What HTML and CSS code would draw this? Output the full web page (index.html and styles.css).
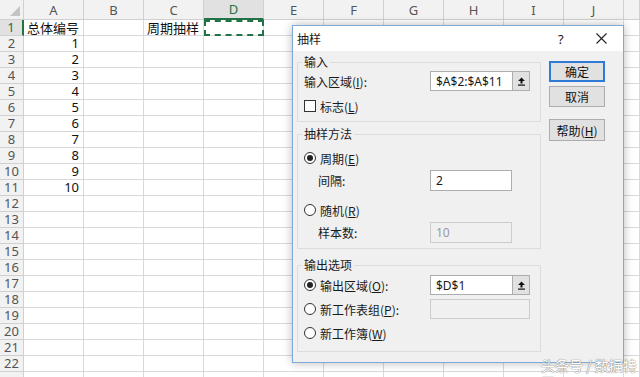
FILE: index.html
```html
<!DOCTYPE html>
<html lang="zh">
<head>
    <meta charset="UTF-8">
    <title>抽样</title>
    <link rel="stylesheet" href="styles.css">
</head>
<body>

<div class="sheet-wrap">
<table class="sheet">
    <colgroup>
        <col class="col-head">
        <col><col><col><col><col><col><col><col><col><col>
        <col class="col-edge">
    </colgroup>
    <tr class="head-row">
        <th class="corner"><span class="corner-mark"></span></th>
        <th>A</th><th>B</th><th>C</th><th class="active">D</th><th>E</th><th>F</th><th>G</th><th>H</th><th>I</th><th>J</th><th></th>
    </tr>
    <tr><th class="active">1</th><td class="text">总体编号</td><td></td><td class="text">周期抽样</td><td class="copied"></td><td></td><td></td><td></td><td></td><td></td><td></td><td></td></tr>
    <tr><th>2</th><td class="num">1</td><td></td><td></td><td></td><td></td><td></td><td></td><td></td><td></td><td></td><td></td></tr>
    <tr><th>3</th><td class="num">2</td><td></td><td></td><td></td><td></td><td></td><td></td><td></td><td></td><td></td><td></td></tr>
    <tr><th>4</th><td class="num">3</td><td></td><td></td><td></td><td></td><td></td><td></td><td></td><td></td><td></td><td></td></tr>
    <tr><th>5</th><td class="num">4</td><td></td><td></td><td></td><td></td><td></td><td></td><td></td><td></td><td></td><td></td></tr>
    <tr><th>6</th><td class="num">5</td><td></td><td></td><td></td><td></td><td></td><td></td><td></td><td></td><td></td><td></td></tr>
    <tr><th>7</th><td class="num">6</td><td></td><td></td><td></td><td></td><td></td><td></td><td></td><td></td><td></td><td></td></tr>
    <tr><th>8</th><td class="num">7</td><td></td><td></td><td></td><td></td><td></td><td></td><td></td><td></td><td></td><td></td></tr>
    <tr><th>9</th><td class="num">8</td><td></td><td></td><td></td><td></td><td></td><td></td><td></td><td></td><td></td><td></td></tr>
    <tr><th>10</th><td class="num">9</td><td></td><td></td><td></td><td></td><td></td><td></td><td></td><td></td><td></td><td></td></tr>
    <tr><th>11</th><td class="num">10</td><td></td><td></td><td></td><td></td><td></td><td></td><td></td><td></td><td></td><td></td></tr>
    <tr><th>12</th><td></td><td></td><td></td><td></td><td></td><td></td><td></td><td></td><td></td><td></td><td></td></tr>
    <tr><th>13</th><td></td><td></td><td></td><td></td><td></td><td></td><td></td><td></td><td></td><td></td><td></td></tr>
    <tr><th>14</th><td></td><td></td><td></td><td></td><td></td><td></td><td></td><td></td><td></td><td></td><td></td></tr>
    <tr><th>15</th><td></td><td></td><td></td><td></td><td></td><td></td><td></td><td></td><td></td><td></td><td></td></tr>
    <tr><th>16</th><td></td><td></td><td></td><td></td><td></td><td></td><td></td><td></td><td></td><td></td><td></td></tr>
    <tr><th>17</th><td></td><td></td><td></td><td></td><td></td><td></td><td></td><td></td><td></td><td></td><td></td></tr>
    <tr><th>18</th><td></td><td></td><td></td><td></td><td></td><td></td><td></td><td></td><td></td><td></td><td></td></tr>
    <tr><th>19</th><td></td><td></td><td></td><td></td><td></td><td></td><td></td><td></td><td></td><td></td><td></td></tr>
    <tr><th>20</th><td></td><td></td><td></td><td></td><td></td><td></td><td></td><td></td><td></td><td></td><td></td></tr>
    <tr><th>21</th><td></td><td></td><td></td><td></td><td></td><td></td><td></td><td></td><td></td><td></td><td></td></tr>
    <tr><th>22</th><td></td><td></td><td></td><td></td><td></td><td></td><td></td><td></td><td></td><td></td><td></td></tr>
    <tr class="last-row"><th></th><td></td><td></td><td></td><td></td><td></td><td></td><td></td><td></td><td></td><td></td><td></td></tr>
</table>
</div>

<!-- 抽样 对话框 -->
<div class="dialog">
    <div class="titlebar">
        <span class="title">抽样</span>
        <span class="help">?</span>
        <span class="close">
            <svg width="11" height="11" viewBox="0 0 11 11"><path d="M0.5 0.5 L10.5 10.5 M10.5 0.5 L0.5 10.5" stroke="#222" stroke-width="1.1" fill="none"/></svg>
        </span>
    </div>

    <div class="dialog-body">
        <div class="groups">
            <fieldset class="group group-input">
                <legend>输入</legend>
                <div class="row">
                    <span class="label">输入区域(<u>I</u>):</span>
                    <span class="ref-input"><span class="box">$A$2:$A$11</span><span class="ref-btn"><svg width="9" height="9" viewBox="0 0 9 9"><path d="M4.5 0.5 L8 4 L5.5 4 L5.5 6.5 L3.5 6.5 L3.5 4 L1 4 Z" fill="#111"/><rect x="1" y="7.5" width="7" height="1.2" fill="#111"/></svg></span></span>
                </div>
                <div class="row row-check">
                    <span class="checkbox"></span>
                    <span class="opt">标志(<u>L</u>)</span>
                </div>
            </fieldset>

            <fieldset class="group group-method">
                <legend>抽样方法</legend>
                <div class="row">
                    <span class="radio checked"></span>
                    <span class="opt">周期(<u>E</u>)</span>
                </div>
                <div class="row">
                    <span class="label indent">间隔:</span>
                    <span class="box plain">2</span>
                </div>
                <div class="row row-gap">
                    <span class="radio"></span>
                    <span class="opt">随机(<u>R</u>)</span>
                </div>
                <div class="row">
                    <span class="label indent">样本数:</span>
                    <span class="box plain disabled">10</span>
                </div>
            </fieldset>

            <fieldset class="group group-output">
                <legend>输出选项</legend>
                <div class="row">
                    <span class="radio checked"></span>
                    <span class="label short">输出区域(<u>O</u>):</span>
                    <span class="ref-input"><span class="box">$D$1</span><span class="ref-btn"><svg width="9" height="9" viewBox="0 0 9 9"><path d="M4.5 0.5 L8 4 L5.5 4 L5.5 6.5 L3.5 6.5 L3.5 4 L1 4 Z" fill="#111"/><rect x="1" y="7.5" width="7" height="1.2" fill="#111"/></svg></span></span>
                </div>
                <div class="row">
                    <span class="radio"></span>
                    <span class="label short">新工作表组(<u>P</u>):</span>
                    <span class="box wide disabled"></span>
                </div>
                <div class="row">
                    <span class="radio"></span>
                    <span class="opt">新工作簿(<u>W</u>)</span>
                </div>
            </fieldset>
        </div>

        <div class="buttons">
            <button class="default">确定</button>
            <button>取消</button>
            <button class="spaced">帮助(<u>H</u>)</button>
        </div>
    </div>
</div>

<div class="watermark">头条号 / 数据特工</div>

</body>
</html>
```

FILE: styles.css
```css
body {
    margin: 0;
    width: 640px;
    height: 377px;
    overflow: hidden;
    background-color: #fff;
    font-family: "Noto Sans CJK SC", "Noto Sans", sans-serif;
}

/* 表格 */
.sheet-wrap {
    height: 377px;
    overflow: hidden;
}

.sheet {
    border-collapse: separate;
    border-spacing: 0;
    table-layout: fixed;
    width: 640px;
    font-size: 13px;
}

.sheet col {
    width: 60px;
}

.sheet col.col-head {
    width: 24px;
}

.sheet col.col-edge {
    width: 16px;
}

.sheet td,
.sheet th {
    height: 15px;
    padding: 0;
    border-right: 1px solid #d9d9d9;
    border-bottom: 1px solid #d9d9d9;
    line-height: 15px;
    white-space: nowrap;
}

.sheet .last-row td,
.sheet .last-row th {
    height: 6px;
}

.sheet th {
    background-color: #f2f2f2;
    border-color: #d0d0d0;
    color: #555;
    font-weight: normal;
    font-family: "Noto Sans", "Noto Sans CJK SC", sans-serif;
    font-size: 13px;
    text-align: center;
}

.sheet .head-row th {
    height: 17px;
    line-height: 18px;
}

.sheet th.corner {
    position: relative;
}

.corner-mark {
    position: absolute;
    right: 3px;
    bottom: 3px;
    width: 0;
    height: 0;
    border-left: 10px solid transparent;
    border-bottom: 10px solid #c4c4c4;
}

.sheet .head-row th.active {
    background-color: #e1e1e1;
    color: #217346;
    border-bottom: 2px solid #217346;
    height: 16px;
}

.sheet tr th.active:first-child {
    background-color: #e1e1e1;
    color: #217346;
    border-right: 2px solid #217346;
}

.sheet td.text {
    padding-left: 3px;
    color: #111;
}

.sheet td.num {
    text-align: right;
    padding-right: 4px;
    color: #111;
    font-family: "Noto Sans", sans-serif;
}

.sheet td.copied {
    outline: 2px dashed #217346;
    outline-offset: -2px;
}

/* 对话框 */
.dialog {
    position: absolute;
    left: 292px;
    top: 25px;
    width: 330px;
    height: 336px;
    background-color: #f0f0f0;
    border: 1px solid #7eaad8;
    box-shadow: 0 0 9px rgba(0, 0, 0, 0.28);
    font-size: 12px;
    color: #1a1a1a;
}

.titlebar {
    display: flex;
    align-items: center;
    height: 25px;
    background-color: #fff;
    padding-left: 4px;
}

.title {
    flex: 1;
}

.help {
    width: 12px;
    margin-right: 26px;
    font-family: "Noto Sans", sans-serif;
    font-size: 13px;
}

.close {
    display: flex;
    margin-right: 16px;
}

.dialog-body {
    display: flex;
    gap: 8px;
    padding: 3px 0 0 4px;
}

.groups {
    display: flex;
    flex-direction: column;
    width: 244px;
}

.group {
    margin: 0;
    padding: 0 0 0 6px;
    border: 1px solid #dcdcdc;
    min-width: 0;
}

.group legend {
    padding: 0 2px;
    margin-left: -2px;
    line-height: 16px;
    height: 16px;
}

.group-input {
    padding-bottom: 4px;
}

.group-method {
    margin-top: 4px;
    padding-top: 5px;
    padding-bottom: 5px;
}

.group-output {
    margin-top: 8px;
    padding-top: 1px;
    padding-bottom: 7px;
}

.row {
    display: flex;
    align-items: center;
    height: 22px;
}

.group-input .row-check {
    margin-top: 3px;
}

.group-output .row + .row {
    margin-top: 2px;
}

.row-gap {
    margin-top: 8px;
}

.label {
    width: 126px;
}

.label.indent {
    padding-left: 14px;
    width: 112px;
}

.label.short {
    width: 110px;
    margin-left: 4px;
}

.opt {
    margin-left: 4px;
}

.ref-input {
    display: flex;
    height: 20px;
}

.box {
    display: flex;
    align-items: center;
    box-sizing: border-box;
    width: 82px;
    height: 20px;
    padding-left: 5px;
    background-color: #fff;
    border: 1px solid #adadad;
    font-family: "Noto Sans", sans-serif;
    font-size: 12px;
}

.ref-input .box {
    border-right: none;
}

.box.plain {
    width: 82px;
    height: 21px;
}

.box.wide {
    width: 100px;
}

.box.disabled {
    background-color: #f0f0f0;
    border-color: #cccccc;
    color: #9a9a9a;
}

.ref-btn {
    display: flex;
    align-items: center;
    justify-content: center;
    box-sizing: border-box;
    width: 18px;
    height: 20px;
    background-color: #e1e1e1;
    border: 1px solid #adadad;
}

.checkbox {
    box-sizing: border-box;
    width: 12px;
    height: 12px;
    background-color: #fff;
    border: 1px solid #333;
}

.radio {
    box-sizing: border-box;
    width: 12px;
    height: 12px;
    border: 1px solid #333;
    border-radius: 50%;
    background-color: #fff;
    position: relative;
}

.radio.checked::after {
    content: "";
    position: absolute;
    left: 2px;
    top: 2px;
    width: 6px;
    height: 6px;
    border-radius: 50%;
    background-color: #222;
}

.buttons {
    display: flex;
    flex-direction: column;
    gap: 4px;
    padding-top: 7px;
}

.buttons button {
    box-sizing: border-box;
    width: 56px;
    height: 21px;
    padding: 0;
    margin: 0;
    background-color: #e1e1e1;
    border: 1px solid #adadad;
    font-family: "Noto Sans CJK SC", sans-serif;
    font-size: 12px;
    color: #111;
}

.buttons button.default {
    border: 2px solid #2f7ad4;
}

.buttons button.spaced {
    margin-top: 8px;
    height: 22px;
}

.watermark {
    position: absolute;
    left: 541px;
    top: 357px;
    font-size: 14px;
    line-height: 16px;
    color: #fff;
    text-shadow: 0 0 1px #777, 0 0 1px #777;
}
```
